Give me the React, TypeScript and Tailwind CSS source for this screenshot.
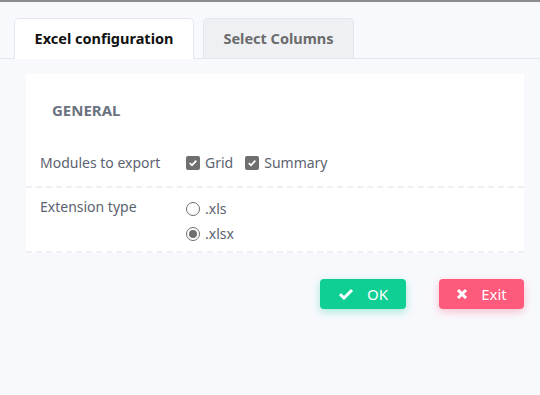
import React from 'react';

function CheckBox({ label }: { label: string }) {
  return (
    <label className="flex items-center gap-[5px]">
      <span className="flex h-[14px] w-[14px] items-center justify-center rounded-[2px] bg-[#6f6f6f]">
        <svg width="10" height="10" viewBox="0 0 10 10">
          <path d="M1.8 5.2 L4 7.3 L8.3 2.6" fill="none" stroke="#fff" strokeWidth="1.8" />
        </svg>
      </span>
      <span>{label}</span>
    </label>
  );
}

function Radio({ label, checked }: { label: string; checked?: boolean }) {
  return (
    <label className="flex items-center gap-[5px]">
      <span className="flex h-[14px] w-[14px] items-center justify-center rounded-full border border-[#6f6f6f] bg-white">
        {checked && <span className="h-[8px] w-[8px] rounded-full bg-[#6f6f6f]" />}
      </span>
      <span>{label}</span>
    </label>
  );
}

export default function App() {
  return (
    <div
      className="h-[395px] w-[540px] border-t-2 border-[#8c8c8c] bg-[#f8f9fd] text-[14px]"
      style={{ fontFamily: '"Noto Sans", sans-serif' }}
    >
      <div className="flex gap-[9px] border-b border-[#e3e6ee] pl-[14px] pt-[16px]">
        <div className="-mb-px flex h-[41px] w-[180px] items-center justify-center rounded-t-[5px] border border-b-0 border-[#e3e6ee] bg-white text-[14.5px] font-bold text-[#111]">
          Excel configuration
        </div>
        <div className="flex h-[40px] w-[151px] items-center justify-center rounded-t-[5px] border border-b-0 border-[#e3e6ee] bg-[#eef0f4] text-[14.5px] font-bold text-[#6b6b6b]">
          Select Columns
        </div>
      </div>

      <div className="ml-[26px] mr-[16px] mt-[15px] bg-white text-[#5c6370]">
        <div className="pl-[26px] pt-[25px] pb-[19px] text-[15px] font-bold leading-[22px] text-[#6b7280]">GENERAL</div>
        <div className="flex border-b-2 border-dashed border-[#f0f0f2] pt-[12px] pb-[13px] pl-[14px]">
          <div className="w-[146px]">Modules to export</div>
          <div className="flex gap-[12px]">
            <CheckBox label="Grid" />
            <CheckBox label="Summary" />
          </div>
        </div>
        <div className="flex border-b-2 border-dashed border-[#f0f0f2] pt-[8px] pb-[7px] pl-[14px]">
          <div className="w-[146px]">Extension type</div>
          <div className="flex flex-col gap-[4px] pt-[2px]">
            <Radio label=".xls" />
            <Radio label=".xlsx" checked />
          </div>
        </div>
      </div>

      <div className="mr-[16px] mt-[26px] flex justify-end gap-[33px]">
        <button className="flex h-[30px] w-[86px] items-center justify-center gap-[13px] rounded-[4px] bg-[#0fcf95] text-[15px] text-white shadow-[0_3px_8px_rgba(15,207,149,0.35)]">
          <svg width="16" height="14" viewBox="0 0 16 14">
            <path d="M2 7.2 L6 11 L14 3" fill="none" stroke="#fff" strokeWidth="3" />
          </svg>
          OK
        </button>
        <button className="flex h-[30px] w-[85px] items-center justify-center gap-[13px] rounded-[4px] bg-[#fe5a7b] text-[15px] text-white shadow-[0_3px_8px_rgba(254,90,123,0.35)]">
          <svg width="12" height="12" viewBox="0 0 12 12">
            <path d="M2 2 L10 10 M10 2 L2 10" fill="none" stroke="#fff" strokeWidth="3" />
          </svg>
          Exit
        </button>
      </div>
    </div>
  );
}
